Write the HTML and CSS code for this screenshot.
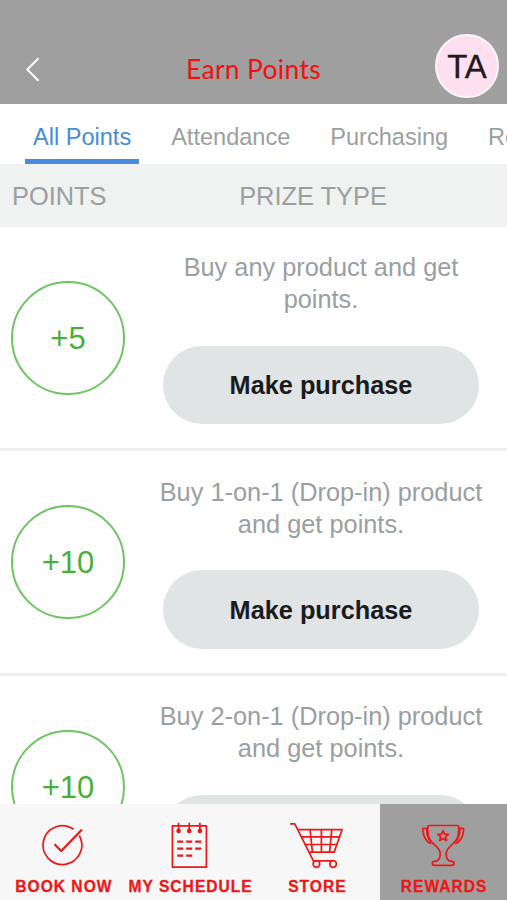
FILE: index.html
```html
<!DOCTYPE html>
<html lang="en">
<head>
<meta charset="utf-8">
<title>Earn Points</title>
<link rel="stylesheet" href="styles.css">
</head>
<body>
<div class="app">
  <header class="header">
    <svg class="back" width="16" height="26" viewBox="0 0 16 26"><path d="M13.5 1.3 2.3 12.5 13.5 23.7"/></svg>
    <h1 class="title">Earn Points</h1>
    <div class="avatar">TA</div>
  </header>
  <nav class="tabs">
    <span class="tab active">All Points</span>
    <span class="tab">Attendance</span>
    <span class="tab">Purchasing</span>
    <span class="tab">Re</span>
  </nav>
  <div class="columns">
    <span class="col-points">POINTS</span>
    <span class="col-prize">PRIZE TYPE</span>
  </div>
  <main class="list">
    <section class="row">
      <div class="points">+5</div>
      <div class="prize">
        <p class="desc">Buy any product and get<br>points.</p>
        <button class="buy">Make purchase</button>
      </div>
    </section>
    <section class="row">
      <div class="points">+10</div>
      <div class="prize">
        <p class="desc">Buy 1-on-1 (Drop-in) product<br>and get points.</p>
        <button class="buy">Make purchase</button>
      </div>
    </section>
    <section class="row">
      <div class="points">+10</div>
      <div class="prize">
        <p class="desc">Buy 2-on-1 (Drop-in) product<br>and get points.</p>
        <button class="buy" aria-label="Make purchase"></button>
      </div>
    </section>
  </main>
  <footer class="nav">
    <div class="item">
      <svg class="icon" width="60" height="50" viewBox="0 0 60 50">
        <path d="M40.6 8.3A19.4 19.4 0 1 0 46.3 14.6"/>
        <path class="bold" d="M21.6 23.3 28.2 30 49 8.6"/>
      </svg>
      <span class="label">BOOK NOW</span>
    </div>
    <div class="item">
      <svg class="icon" width="60" height="50" viewBox="0 0 60 50">
        <path d="M12.4 4.9H46.4V46.2H12.4Z"/>
        <path d="M18.6 1.8V9M29.2 1.8V9M39.9 1.8V9"/>
        <g class="dots"><circle cx="18.6" cy="9.9" r="2.3"/><circle cx="29.2" cy="9.9" r="2.3"/><circle cx="39.9" cy="9.9" r="2.3"/></g>
        <path class="bold" d="M17.2 20.7H23.2M26.2 20.7H32.2M35.2 20.7H41.2M17.2 27.7H23.2M26.2 27.7H32.2M35.2 27.7H41.2M17.2 34.7H23.2M26.2 34.7H32.2"/>
      </svg>
      <span class="label">MY SCHEDULE</span>
    </div>
    <div class="item">
      <svg class="icon" width="60" height="50" viewBox="0 0 60 50">
        <path d="M3.1 2.9H7.8L26.4 39.8H46.4M11.4 8.7H55.1L47.1 31.2H22.3M14.8 15.9H52.4M18.4 23.5H49.7M23.1 8.7 25.4 31M34.4 8.7V31M44.8 8.7 42.6 31"/>
        <circle cx="29.4" cy="43" r="3.3"/><circle cx="46.1" cy="43" r="3.3"/>
      </svg>
      <span class="label">STORE</span>
    </div>
    <div class="item active">
      <svg class="icon" width="60" height="50" viewBox="0 0 60 50">
        <path d="M13.8 6C13.8 5 14.3 4.5 15.3 4.5H43.2C44.2 4.5 44.7 5 44.7 6V10C44.7 24.5 32.2 23.5 32.2 33 32.2 38 34.5 40.3 38 40.3 40.7 40.3 40.7 44.3 38 44.3H20.4C17.7 44.3 17.7 40.3 20.4 40.3 23.9 40.3 26.2 38 26.2 33 26.2 23.5 13.8 24.5 13.8 10Z"/>
        <path d="M13.8 7.3H9.9C8.9 7.3 8.7 7.8 8.8 8.8 9.3 15 11.5 20.5 17.3 22.8M44.7 7.3H48.5C49.5 7.3 49.7 7.8 49.6 8.8 49.1 15 47 20.5 41.2 22.8M12.7 7.5C12.5 13 13.8 17.5 17 20.5M45.8 7.5C46 13 44.7 17.5 41.5 20.5"/>
        <path d="M29.1 9.7 30.6 13.1 34.4 13.4 31.5 15.8 32.4 19.5 29.1 17.5 25.8 19.5 26.7 15.8 23.8 13.4 27.6 13.1Z"/>
      </svg>
      <span class="label">REWARDS</span>
    </div>
  </footer>
</div>
</body>
</html>
```

FILE: styles.css
```css
* { box-sizing: border-box; }

body {
  margin: 0;
  font-family: "Liberation Sans", Arial, sans-serif;
  background: #fefefe;
}

.app {
  width: 507px;
  height: 900px;
  display: flex;
  flex-direction: column;
  overflow: hidden;
}

.header {
  flex: none;
  height: 104px;
  padding: 34px 8px 0 25px;
  display: grid;
  grid-template-columns: 64px 1fr 64px;
  align-items: start;
  background: #9f9f9f;
}

.back {
  margin-top: 23px;
  fill: none;
  stroke: #fff;
  stroke-width: 2;
}

.title {
  margin: 19px 17px 0 0;
  font: 400 26.4px/32px Lato, sans-serif;
  letter-spacing: 0.35px;
  text-align: center;
  color: #f01010;
}

.avatar {
  width: 64px;
  height: 64px;
  border: 2px solid #fbf6f9;
  border-radius: 50%;
  background: #fddff0;
  color: #1e1a1e;
  font-size: 33px;
  line-height: 61px;
  text-align: center;
  -webkit-text-stroke: 0.3px #1e1a1e;
}

.tabs {
  flex: none;
  height: 60px;
  padding-left: 25px;
  display: flex;
  gap: 24px;
  background: #fff;
  overflow: hidden;
}

.tab {
  flex: none;
  padding: 0 8px;
  font-size: 23.55px;
  line-height: 66px;
  color: #9b9fa0;
}

.tab.active {
  color: #468bdc;
  border-bottom: 5px solid #468bdc;
}

.columns {
  flex: none;
  height: 62.5px;
  padding: 0 0 0 12px;
  display: grid;
  grid-template-columns: 107px 1fr;
  font-size: 25.4px;
  line-height: 64px;
  color: #9b9fa0;
  background: #f0f1f1;
}

.col-prize { text-align: center; }

.list {
  flex: 1;
  min-height: 0;
  overflow: hidden;
}

.row {
  height: 224.5px;
  padding: 1px 26px 0 11px;
  display: grid;
  grid-template-columns: 114px 320px;
  justify-content: space-between;
  align-items: center;
  border-bottom: 3px solid #eef0f0;
}

.points {
  width: 114px;
  height: 114px;
  border: 2px solid #70c464;
  border-radius: 50%;
  font-size: 31px;
  line-height: 112px;
  text-align: center;
  color: #4aae3a;
}

.prize {
  align-self: start;
  padding: 24.8px 0 0;
  display: flex;
  flex-direction: column;
  align-items: center;
}

.desc {
  margin: 0 -8px;
  font-size: 25.35px;
  line-height: 31.7px;
  text-align: center;
  white-space: nowrap;
  color: #9b9fa0;
}

.buy {
  width: 316px;
  height: 78.5px;
  margin-top: 30px;
  padding: 2px 0 0;
  border: 0;
  border-radius: 40px;
  background: #e0e4e4;
  color: #191b1c;
  font: bold 25.3px "Liberation Sans", Arial, sans-serif;
}

.nav {
  flex: none;
  height: 96px;
  display: grid;
  grid-template-columns: repeat(4, 1fr);
  background: #f8f7f8;
}

.item {
  padding-top: 17px;
  display: flex;
  flex-direction: column;
  align-items: center;
  color: #ec1818;
}

.item.active { background: #9f9f9f; }

.icon {
  fill: none;
  stroke: currentColor;
  stroke-width: 1.7;
  stroke-linejoin: round;
}

.bold { stroke-width: 2.2; }

.dots { fill: currentColor; stroke: none; }

.label {
  margin-top: 7px;
  padding-left: 1px;
  font-size: 15.6px;
  font-weight: bold;
  line-height: 18px;
  letter-spacing: 1px;
  white-space: nowrap;
  -webkit-text-stroke: 0.3px currentColor;
}
```
